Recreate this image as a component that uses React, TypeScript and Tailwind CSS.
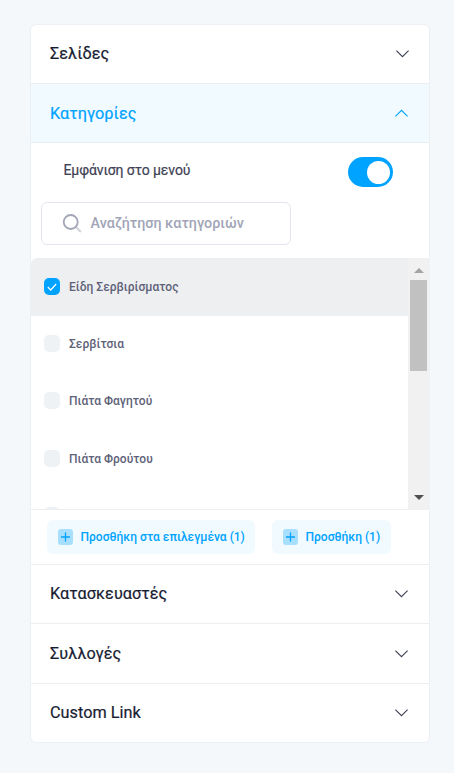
import React from "react";

function Chevron({ up = false, className = "" }: { up?: boolean; className?: string }) {
  return (
    <svg width="13" height="8" viewBox="0 0 13 8" fill="none" className={className}>
      <path
        d={up ? "M0.4 7.4 L6.5 1.3 L12.6 7.4" : "M0.4 0.7 L6.5 6.6 L12.6 0.7"}
        stroke="currentColor"
        strokeWidth="1.15"
      />
    </svg>
  );
}

function Row({ label, height, chevron }: { label: string; height: string; chevron: string }) {
  return (
    <div className={"flex items-center justify-between pl-[19px] text-[#181c32] " + height}>
      <span className="text-[16.25px] leading-6 tracking-[0.03px] [-webkit-text-stroke:0.2px]">{label}</span>
      <Chevron className={"text-[#3f4254] " + chevron} />
    </div>
  );
}

function PlusIcon() {
  return (
    <svg width="15" height="16" viewBox="0 0 15 16" className="shrink-0">
      <rect x="0" y="0" width="15" height="16" rx="3" fill="#00a3ff" opacity="0.3" />
      <path d="M7.5 3.5V12.5M3 8H12" stroke="#00a3ff" strokeWidth="1.3" />
    </svg>
  );
}

function AddButton({ label, className }: { label: string; className: string }) {
  return (
    <button
      className={
        "flex h-[34px] items-center gap-[7.5px] rounded-md bg-[#f1faff] pl-[11px] text-[12.025px] leading-[18px] font-medium whitespace-nowrap text-[#00a3ff] " +
        className
      }
    >
      <PlusIcon />
      {label}
    </button>
  );
}

const categories = [
  { name: "Είδη Σερβιρίσματος", height: "h-[57px]", checked: true },
  { name: "Σερβίτσια", height: "h-[57px]", checked: false },
  { name: "Πιάτα Φαγητού", height: "h-[58px]", checked: false },
  { name: "Πιάτα Φρούτου", height: "h-[57px]", checked: false },
];

export default function App() {
  return (
    <div className="h-[776px] bg-white font-['Roboto','Noto_Sans',sans-serif]">
      <div className="h-[773px] bg-[#f4f8fb] pt-6 pl-[30px]">
        <div className="h-[719px] w-[400px] rounded-md border border-[#eceff3] bg-white">
          <Row label="Σελίδες" height="h-[58px]" chevron="mr-5" />
          <div className="flex h-[60px] items-center justify-between border-y border-[#e9eef2] bg-[#f1faff] pl-[19px] text-[#00a3ff]">
            <span className="pt-px text-[16.25px] leading-6 tracking-[0.03px] [-webkit-text-stroke:0.2px]">
              Κατηγορίες
            </span>
            <Chevron up className="mr-[21px]" />
          </div>

          <div className="flex h-[59px] items-center justify-between pr-9 pl-[32.5px]">
            <span className="pb-1 text-[14px] leading-[21px] tracking-[-0.1px] text-[#3f4254] [-webkit-text-stroke:0.2px]">
              Εμφάνιση στο μενού
            </span>
            <span className="mb-px flex h-[30px] w-[45px] items-center justify-end rounded-full bg-[#00a3ff] pr-[3.5px]">
              <span className="size-[23px] rounded-full bg-white" />
            </span>
          </div>

          <div className="ml-[10px] flex h-[43px] w-[250px] items-center rounded-md border border-[#e4e6ef] pl-[20px]">
            <svg width="21" height="21" viewBox="0 0 21 21" fill="none">
              <path d="M14 14L18.8 19" stroke="#a1a5b7" strokeOpacity="0.5" strokeWidth="2" />
              <circle cx="8.7" cy="9" r="7" stroke="#a1a5b7" strokeWidth="1.8" />
            </svg>
            <span className="ml-[7.5px] text-[14.3px] leading-[21px] font-medium text-[#a1a5b7]">
              Αναζήτηση κατηγοριών
            </span>
          </div>

          <div className="mt-[13px] -mr-px flex h-[252px] border-b border-[#eceff1]">
            <div className="h-[251px] flex-1 overflow-hidden rounded-tl-md border-t border-[#eceff1]">
              {categories.map(({ name, height, checked }) => (
                <div key={name} className={"flex pt-[19px] pl-[13px] " + height + (checked ? " bg-[#eeeff1]" : "")}>
                  <span
                    className={
                      "flex h-[17px] w-4 items-center justify-center rounded-[5px] " +
                      (checked ? "bg-[#00a3ff]" : "bg-[#eff2f5]")
                    }
                  >
                    {checked && (
                      <svg width="12" height="10" viewBox="0 0 12 10" fill="none">
                        <path d="M1.8 5L4.7 8L10.2 2" stroke="white" strokeWidth="1.2" />
                      </svg>
                    )}
                  </span>
                  <span className="ml-[9px] text-[12.025px] leading-[18px] font-medium text-[#5e6278]">{name}</span>
                </div>
              ))}
              <div className="pt-[19px] pl-[13px]">
                <div className="h-4 w-4 rounded-[5px] bg-[#eff2f5]" />
              </div>
            </div>
            <div className="flex h-[252px] w-[22px] flex-col items-center bg-[#f1f1f1] pr-px">
              <svg width="10" height="5" viewBox="0 0 10 5" className="mt-[10px]">
                <path d="M0 5L5 0L10 5Z" fill="#a3a3a3" />
              </svg>
              <div className="mt-[7px] h-[91px] w-[17px] bg-[#c1c1c1]" />
              <svg width="10" height="5" viewBox="0 0 10 5" className="mt-auto mb-[10px]">
                <path d="M0 0L5 5L10 0Z" fill="#505050" />
              </svg>
            </div>
          </div>

          <div className="flex h-[55px] gap-[17px] border-b border-[#eceff2] pt-[10px] pl-4">
            <AddButton label="Προσθήκη στα επιλεγμένα (1)" className="w-[208px]" />
            <AddButton label="Προσθήκη (1)" className="w-[119px]" />
          </div>
          <Row label="Κατασκευαστές" height="h-[58px]" chevron="mr-[21px]" />
          <div className="border-y border-[#eceff2]">
            <Row label="Συλλογές" height="h-[59px]" chevron="mr-[21px]" />
          </div>
          <Row label="Custom Link" height="h-[58px]" chevron="mr-[21px]" />
        </div>
      </div>
    </div>
  );
}
